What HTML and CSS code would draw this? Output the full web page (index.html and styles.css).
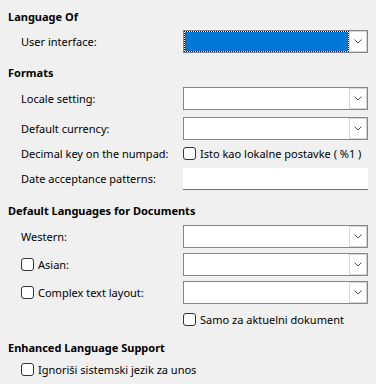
FILE: index.html
```html
<!DOCTYPE html>
<html lang="en">
<head>
<meta charset="utf-8">
<title>Languages</title>
<link rel="stylesheet" href="styles.css">
</head>
<body>
<div class="page">
  <div class="heading">Language Of</div>
  <div class="row mt3">
    <span class="label">User interface:</span>
    <div class="combo">
      <div class="combo-field selected"></div>
      <div class="combo-btn"><svg width="8" height="5" viewBox="0 0 8 5"><polyline points="0.5,0.5 4,4 7.5,0.5" fill="none" stroke="#555" stroke-width="1"/></svg></div>
    </div>
  </div>

  <div class="heading mt10">Formats</div>
  <div class="row mt4">
    <span class="label">Locale setting:</span>
    <div class="combo">
      <div class="combo-field"></div>
      <div class="combo-btn"><svg width="8" height="5" viewBox="0 0 8 5"><polyline points="0.5,0.5 4,4 7.5,0.5" fill="none" stroke="#555" stroke-width="1"/></svg></div>
    </div>
  </div>
  <div class="row mt7">
    <span class="label">Default currency:</span>
    <div class="combo">
      <div class="combo-field"></div>
      <div class="combo-btn"><svg width="8" height="5" viewBox="0 0 8 5"><polyline points="0.5,0.5 4,4 7.5,0.5" fill="none" stroke="#555" stroke-width="1"/></svg></div>
    </div>
  </div>
  <div class="row mt2">
    <span class="label">Decimal key on the numpad:</span>
    <label class="check"><span class="box"></span><span>Isto kao lokalne postavke ( %1 )</span></label>
  </div>
  <div class="row mt2">
    <span class="label">Date acceptance patterns:</span>
    <div class="textbox"></div>
  </div>

  <div class="heading mt11">Default Languages for Documents</div>
  <div class="row mt4">
    <span class="label">Western:</span>
    <div class="combo">
      <div class="combo-field"></div>
      <div class="combo-btn"><svg width="8" height="5" viewBox="0 0 8 5"><polyline points="0.5,0.5 4,4 7.5,0.5" fill="none" stroke="#555" stroke-width="1"/></svg></div>
    </div>
  </div>
  <div class="row mt5">
    <label class="check"><span class="box"></span><span>Asian:</span></label>
    <div class="combo">
      <div class="combo-field"></div>
      <div class="combo-btn"><svg width="8" height="5" viewBox="0 0 8 5"><polyline points="0.5,0.5 4,4 7.5,0.5" fill="none" stroke="#555" stroke-width="1"/></svg></div>
    </div>
  </div>
  <div class="row mt5">
    <label class="check"><span class="box"></span><span>Complex text layout:</span></label>
    <div class="combo">
      <div class="combo-field"></div>
      <div class="combo-btn"><svg width="8" height="5" viewBox="0 0 8 5"><polyline points="0.5,0.5 4,4 7.5,0.5" fill="none" stroke="#555" stroke-width="1"/></svg></div>
    </div>
  </div>
  <div class="row mt4">
    <span class="label"></span>
    <label class="check"><span class="box"></span><span>Samo za aktuelni dokument</span></label>
  </div>

  <div class="heading mt7">Enhanced Language Support</div>
  <div class="row">
    <label class="check"><span class="box"></span><span>Ignoriši sistemski jezik za unos</span></label>
  </div>
</div>
</body>
</html>
```
FILE: styles.css
```css
* { box-sizing: border-box; }
html, body { margin: 0; padding: 0; background: #f0f0f0; }
body {
  font-family: "Noto Sans", "Open Sans", sans-serif;
  font-size: 11px;
  color: #000;
}
.page {
  display: flex;
  flex-direction: column;
  padding: 7px 0 0 8px;
}
.heading {
  height: 20px;
  line-height: 20px;
  font-weight: 700;
}
.row {
  display: grid;
  grid-template-columns: 162px 185px;
  align-items: center;
  height: 23px;
  margin-left: 13px;
}
.label { white-space: nowrap; }
.mt2 { margin-top: 2px; }
.mt3 { margin-top: 3px; }
.mt4 { margin-top: 4px; }
.mt5 { margin-top: 5px; }
.mt7 { margin-top: 7px; }
.mt10 { margin-top: 10px; }
.mt11 { margin-top: 11px; }

.combo {
  display: flex;
  width: 185px;
  height: 23px;
  border: 1px solid #858589;
  background: #fff;
}
.combo-field { flex: 1; }
.combo-field.selected {
  border: 1px dotted #000;
  background: #0078d7;
  background-clip: padding-box;
}
.combo-btn {
  width: 18px;
  border: 1px solid #d7d7d7;
  margin: 0;
  display: flex;
  align-items: center;
  justify-content: center;
}
.combo-btn svg { display: block; }

.textbox {
  width: 185px;
  height: 22px;
  background: #fff;
  border-bottom: 1px solid #6f6f6f;
}

.check {
  display: flex;
  align-items: center;
  gap: 4px;
  white-space: nowrap;
}
.box {
  width: 13px;
  height: 13px;
  border: 1px solid #333;
  border-radius: 3px;
  background: #fff;
  flex: none;
}
```
